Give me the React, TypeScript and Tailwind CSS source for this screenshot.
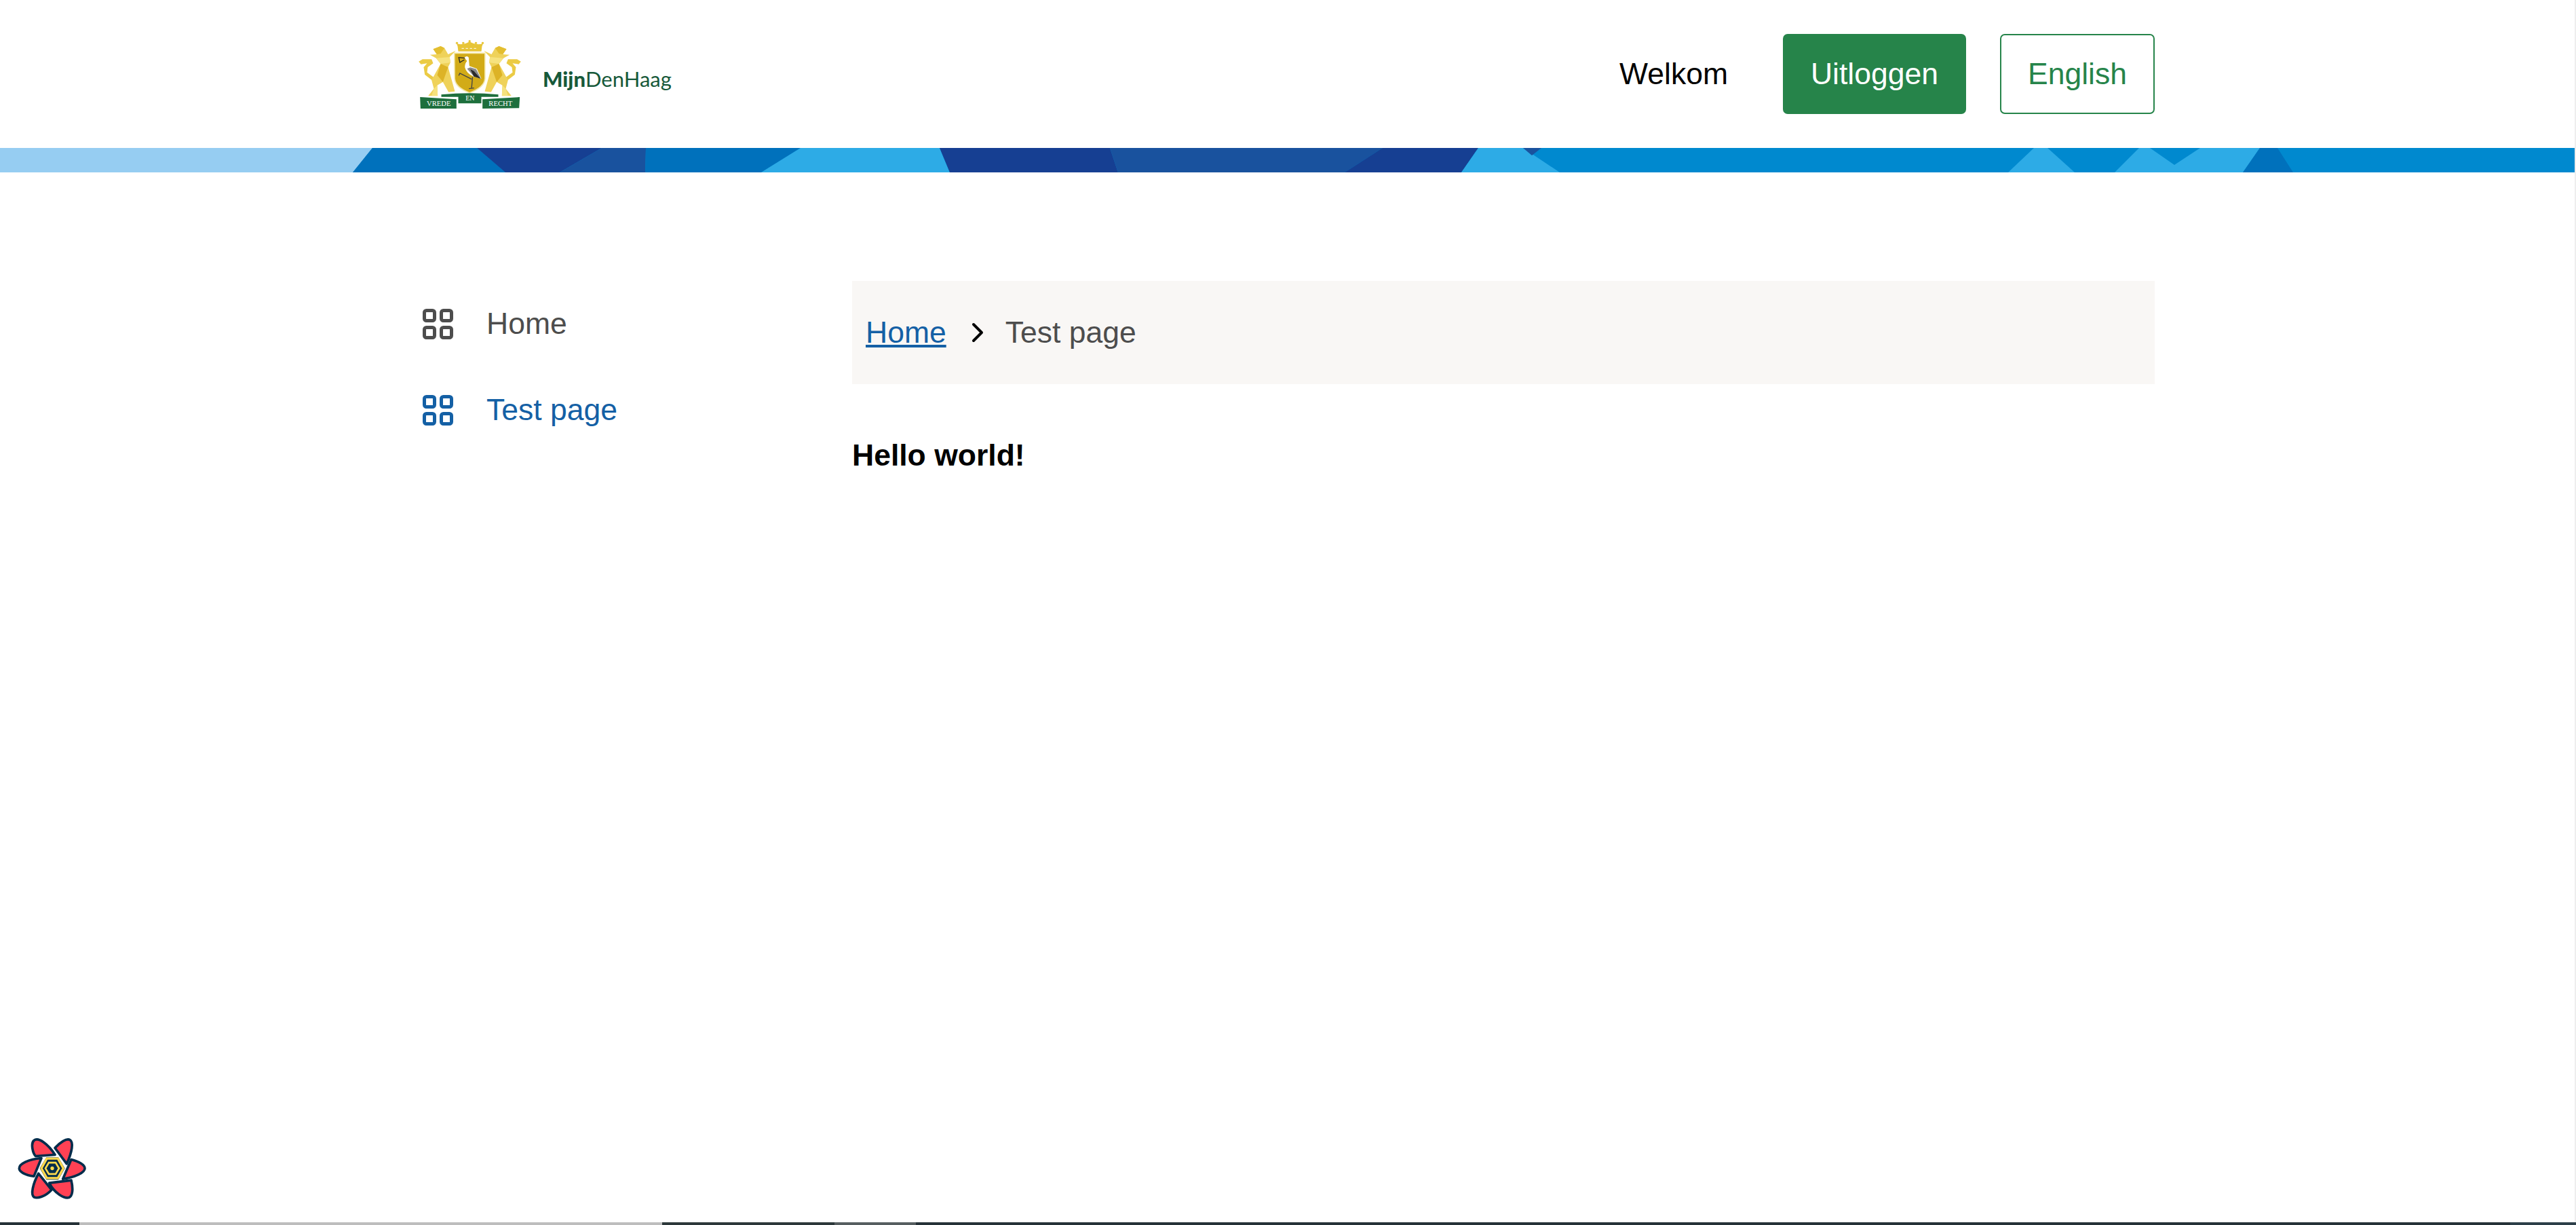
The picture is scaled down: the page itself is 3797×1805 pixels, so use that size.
const navItems = [
  { label: "Home", active: false },
  { label: "Test page", active: true },
];

const GridIcon = ({ color }: { color: string }) => (
  <svg width="45" height="45" viewBox="0 0 45 45" fill="none" stroke={color} strokeWidth="5">
    <rect x="2.5" y="2.5" width="15" height="15" rx="3" />
    <rect x="27.5" y="2.5" width="15" height="15" rx="3" />
    <rect x="2.5" y="27.5" width="15" height="15" rx="3" />
    <rect x="27.5" y="27.5" width="15" height="15" rx="3" />
  </svg>
);

const Lion = ({ flip }: { flip?: boolean }) => (
  <g transform={flip ? "translate(668 0) scale(-1 1)" : undefined}>
    {/* tail */}
    <path d="M108 180 L125 170 L165 170 L172 188 L148 205 L145 228 L175 250 L170 265 L135 238 L130 205 L145 188 L118 192 Z" fill="#EBCB45" />
    {/* body */}
    <path d="M172 125 L205 112 L222 120 L238 148 L272 132 L245 160 L248 185 L238 205 L268 312 L240 315 L215 270 L190 285 L192 332 L150 332 L175 300 L165 262 L180 235 L205 190 L185 165 L158 150 L188 148 Z" fill="#EFD25A" />
    <path d="M185 165 L245 160 L248 185 L205 190 Z" fill="#F6E27E" />
    <path d="M205 190 L238 205 L215 270 L190 240 Z" fill="#DDB326" />
    <path d="M172 125 L205 112 L222 120 L205 145 L188 148 Z" fill="#E3BE30" />
    <path d="M175 300 L190 285 L192 332 L165 332 Z" fill="#F6E27E" />
  </g>
);

const Crest = () => (
  <svg width="151" height="101" viewBox="108 85 452 303">
    <Lion />
    <Lion flip />
    {/* crown */}
    <path d="M280 112 H388 L385 135 H283 Z" fill="#E7C537" />
    <path d="M275 100 Q303 110 333 92 Q363 110 393 100 L388 112 H280 Z" fill="#E7C537" />
    <circle cx="277" cy="98" r="5" fill="#E7C537" />
    <circle cx="305" cy="98" r="5" fill="#E7C537" />
    <circle cx="333" cy="90" r="5" fill="#E7C537" />
    <circle cx="361" cy="98" r="5" fill="#E7C537" />
    <circle cx="391" cy="98" r="5" fill="#E7C537" />
    <path d="M298 122 H370" stroke="#fff" strokeWidth="3" strokeDasharray="10 8" />
    {/* shield */}
    <path d="M266 143 H401 V255 Q398 295 333 318 Q270 295 267 255 Z" fill="#D2AB17" stroke="#F3E6A4" strokeWidth="5" />
    {/* stork */}
    <path d="M310 162 Q322 152 329 162 L332 200 L365 212 L385 256 L350 246 Q318 232 312 205 Q312 188 322 178 Z" fill="#fff" />
    <path d="M336 206 L362 213 L383 255 L352 246 L322 212 Z" fill="#8A8A8A" />
    <path d="M336 214 L352 222 L382 256 L352 246 Z" fill="#2B2B2B" />
    <path d="M312 165 L283 162 M285 162 L290 184 L310 172" stroke="#222" strokeWidth="4" fill="none" />
    <path d="M346 248 L342 296 M330 300 L353 297 M342 258 L290 232 L285 242" stroke="#444" strokeWidth="4" fill="none" />
    {/* banners */}
    <path d="M208 326 Q335 314 460 326 V336 H208 Z" fill="#1E6F3D" />
    <path d="M114 337 L275 347 V388 H116 Z" fill="#1E6F3D" />
    <path d="M390 347 L555 337 L552 386 L390 388 Z" fill="#1E6F3D" />
    <path d="M283 326 H385 V365 H283 Z" fill="#1E6F3D" />
    <text x="197" y="377" textAnchor="middle" fontFamily="'Liberation Serif', serif" fontSize="32" fill="#fff">VREDE</text>
    <text x="335" y="353" textAnchor="middle" fontFamily="'Liberation Serif', serif" fontSize="30" fill="#fff">EN</text>
    <text x="470" y="377" textAnchor="middle" fontFamily="'Liberation Serif', serif" fontSize="32" fill="#fff">RECHT</text>
  </svg>
);

const Banner = () => (
  <svg className="block w-full h-[36px]" viewBox="0 0 3795 36" preserveAspectRatio="none">
    <rect width="3795" height="36" fill="#0089CF" />
    <path d="M0 0 H549 L520 36 H0 Z" fill="#96CDF2" />
    <path d="M549 0 H703 L745 36 H520 Z" fill="#0071BC" />
    <path d="M703 0 H887 L825 36 H745 Z" fill="#163F92" />
    <path d="M887 0 H952 L951 36 H825 Z" fill="#19529E" />
    <path d="M952 0 H1180 L1122 36 H951 Z" fill="#0071BC" />
    <path d="M1180 0 H1385 L1400 36 H1122 Z" fill="#2DABE6" />
    <path d="M1385 0 H1636 L1648 36 H1400 Z" fill="#163F92" />
    <path d="M1636 0 H2038 L1982 36 H1648 Z" fill="#19529E" />
    <path d="M2038 0 H2179 L2154 36 H1982 Z" fill="#163F92" />
    <path d="M2179 0 H2245 L2299 36 H2154 Z" fill="#2DABE6" />
    <path d="M2245 0 H2272 L2258 11 Z" fill="#19529E" />
    <path d="M2998 0 H3018 L3058 36 H2960 Z" fill="#2DABE6" />
    <path d="M3153 0 H3169 L3205 25 L3243 0 H3331 L3306 36 H3117 Z" fill="#2DABE6" />
    <path d="M3331 0 H3357 L3380 36 H3306 Z" fill="#0071BC" />
  </svg>
);

const QueryLogo = () => (
  <svg className="absolute left-[26px] bottom-[37px]" width="102" height="93" viewBox="78 76 306 278">
    <g fill="#FF4154" stroke="#002C4B" strokeWidth="11" strokeLinejoin="round">
      <path d="M150 92 C170 75 215 110 243 155 L158 161 C145 150 135 105 150 92 Z" />
      <path d="M310 90 C325 100 320 140 295 195 L243 125 C265 100 295 80 310 90 Z" />
      <path d="M315 176 C350 185 375 200 375 215 C375 235 330 255 278 262 Z" />
      <path d="M218 280 L315 268 C325 310 320 338 305 344 C285 350 240 325 218 280 Z" />
      <path d="M170 238 L228 310 C200 340 165 350 150 342 C135 330 145 285 170 238 Z" />
      <path d="M85 215 C85 195 125 175 183 170 L150 250 C110 245 85 230 85 215 Z" />
    </g>
    {/* hexagon core */}
    <path d="M205 166 H258 L287 215 L258 265 H205 L176 215 Z" fill="#002C4B" />
    <path d="M207 172 H256 L280 215 L256 258 H207 L183 215 Z" fill="none" stroke="#FFD94C" strokeWidth="10" />
    <path d="M216 190 H246 L261 215 L246 240 H216 L201 215 Z" fill="none" stroke="#FFD94C" strokeWidth="8" />
    <circle cx="231" cy="215" r="8" fill="#FFD94C" />
  </svg>
);

const App = () => {
  return (
    <div className="relative flex flex-col h-[1805px] overflow-hidden bg-white font-['Liberation_Sans',Arial,sans-serif] text-[44.5px]">
      <div className="flex flex-1 min-h-0">
        <div className="flex flex-col flex-1 min-w-0">
          <header className="flex items-center h-[218px] pl-[617px] pr-[619px]">
            <div className="flex items-center gap-[32px]">
              <Crest />
              <span className="mt-[15px] font-['Lato',sans-serif] text-[31px] text-[#17593A]">
                <b className="font-black">Mijn</b>DenHaag
              </span>
            </div>
            <span className="ml-auto text-black">Welkom</span>
            <button className="ml-[81px] w-[270px] h-[118px] rounded-[7px] bg-[#26844A] text-white">
              Uitloggen
            </button>
            <button className="ml-[50px] w-[228px] h-[118px] rounded-[7px] border-2 border-[#26844A] text-[#26844A]">
              English
            </button>
          </header>

          <Banner />

          <main className="flex flex-1 pl-[617px] pr-[619px] pt-[160px]">
            <nav className="flex flex-col w-[639px] pt-[29px] gap-[58px]">
              {navItems.map((item) => (
                <a
                  key={item.label}
                  className={`flex items-center h-[69px] gap-[49px] pl-[6px] ${
                    item.active ? "text-[#1460A5]" : "text-[#4D4D4D]"
                  }`}
                >
                  <GridIcon color={item.active ? "#1460A5" : "#4D4D4D"} />
                  {item.label}
                </a>
              ))}
            </nav>

            <div className="flex-1">
              <div className="flex items-center h-[152px] pl-[20px] bg-[#F9F7F5] text-[#4D4D4D]">
                <a className="text-[#1460A5] underline">Home</a>
                <svg className="ml-[35px] mr-[30px]" width="22" height="30" viewBox="0 0 22 30" fill="none" stroke="#000" strokeWidth="4" strokeLinecap="round" strokeLinejoin="round">
                  <path d="M5 3 L17 15 L5 27" />
                </svg>
                Test page
              </div>
              <p className="mt-[72px] font-bold text-black">Hello world!</p>
            </div>
          </main>
        </div>
        <div className="w-[2px] bg-[#EEEEEE]" />
      </div>

      <div className="flex h-[4px] bg-[#263238]">
        <div className="w-[117px]" />
        <div className="w-[859px] bg-[#BDBDBD]" />
        <div className="w-[254px] bg-[#2D383A]" />
        <div className="w-[120px] bg-[#565E60]" />
        <div className="flex-1" />
        <div className="w-[97px] bg-[#2D3F49]" />
      </div>
      <QueryLogo />
    </div>
  );
};

export default App;
